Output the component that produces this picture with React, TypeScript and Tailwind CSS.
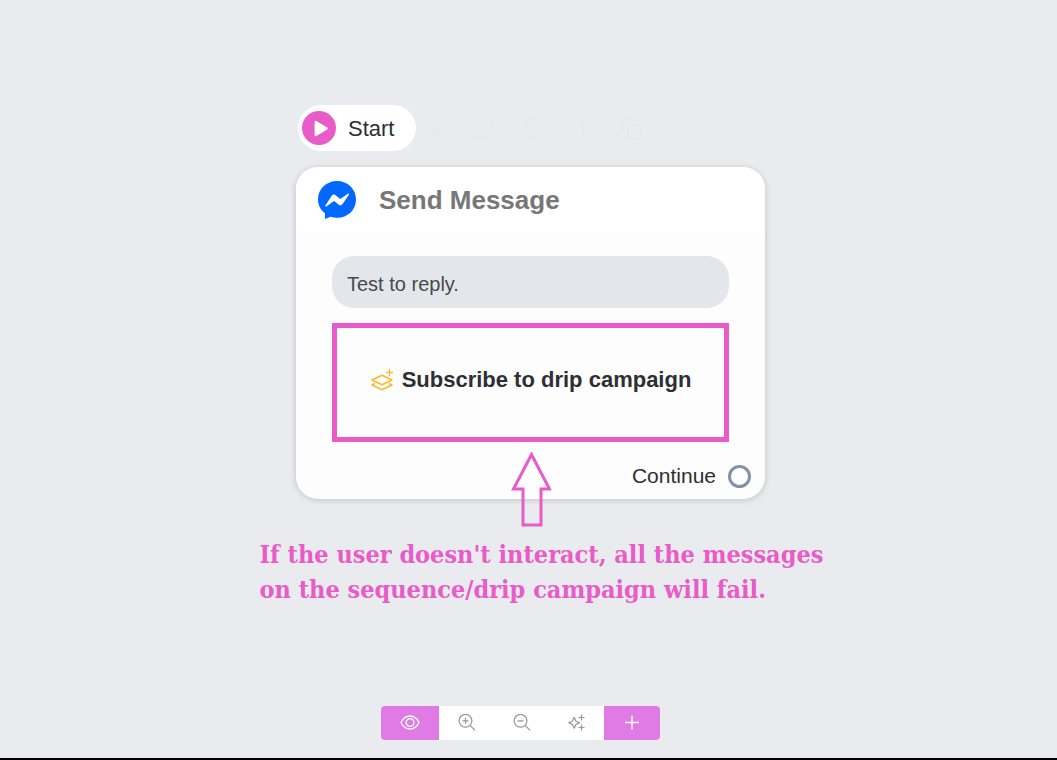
import React from "react";
import { Copy, Eye, Fingerprint, Link, Type } from "lucide-react";

function PlayIcon() {
  return (
    <svg width="34" height="34" viewBox="0 0 34 34" aria-hidden="true">
      <circle cx="17" cy="17" r="17" fill="#e85bc8" />
      <path d="M13.800 11v13l10.800-6.500z" fill="#fff" stroke="#fff" strokeWidth="2.400" strokeLinejoin="round" />
    </svg>
  );
}

function MessengerIcon() {
  return (
    <svg width="38" height="38" viewBox="0 0 38 38" aria-hidden="true">
      <path d="M19 0C8.500 0 0 7.800 0 18.400c0 5.600 2.600 10.500 7 13.800v5.800l5.500-2.200c2 .6 4.200.9 6.500.9 10.500 0 19-7.700 19-18.300S29.500 0 19 0z" fill="#0068ff" />
      <path d="M7.500 24.200l6.200-9.400c1-1.400 2.600-1.600 3.900-.6l4 3.200c.5.4 1 .4 1.500 0l6.600-4.700c.9-.6 1.800.2 1.200 1.100l-6.300 9.300c-.9 1.400-2.500 1.600-3.800.6l-4-3.200c-.5-.4-1-.4-1.500 0L8.800 25.300c-.9.600-1.900-.2-1.300-1.100z" fill="#fff" />
    </svg>
  );
}

function LayersPlusIcon() {
  return (
    <svg width="24" height="24" viewBox="0 0 24 24" fill="none" stroke="#fdb92e" strokeWidth="1.500" strokeLinejoin="round" strokeLinecap="round" aria-hidden="true">
      <path d="M12 7.200l10 4.800-10 4.800L2 12zM4.500 15.800L2 17l10 4.800L22 17l-2.500-1.200" />
      <path d="M19.500 1.500v6M16.500 4.500h6" strokeWidth="1.300" />
    </svg>
  );
}

function EyeIcon() {
  return (
    <svg width="20" height="20" viewBox="0 0 20 20" fill="none" stroke="#fff" strokeWidth="1.400" aria-hidden="true">
      <path d="M1 9.500c2-4.300 5.200-6.500 9-6.500s7 2.200 9 6.500c-2 4.300-5.200 6.500-9 6.500s-7-2.200-9-6.500z" />
      <circle cx="10" cy="9.500" r="3.900" />
    </svg>
  );
}

function ZoomIcon({ plus }: { plus?: boolean }) {
  return (
    <svg width="18" height="18" viewBox="0 0 18 18" fill="none" stroke="#949698" strokeWidth="1.200" aria-hidden="true">
      <circle cx="7.500" cy="6.800" r="6.400" />
      <path d="M12.100 11.400l5 5M4.500 6.800h6" />
      {plus && <path d="M7.500 3.800v6" />}
    </svg>
  );
}

function SparkleIcon() {
  return (
    <svg width="18" height="18" viewBox="0 0 18 18" fill="none" stroke="#949698" strokeWidth="1.200" strokeLinejoin="round" aria-hidden="true">
      <path d="M6.200 3.200l1.700 3.800 3.800 1.700-3.800 1.700-1.700 3.800-1.700-3.800L.7 8.700 4.500 7z" />
      <path d="M13.500.500v6M10.500 3.500h6M13.500 10.500v6M10.500 13.500h6" />
    </svg>
  );
}

function PlusIcon() {
  return (
    <svg width="16" height="16" viewBox="0 0 16 16" stroke="#fff" strokeWidth="1.400" aria-hidden="true">
      <path d="M8 .500v14M1 7.500h14" />
    </svg>
  );
}

function PointerArrow() {
  return (
    <svg className="absolute left-1/2 top-[285px] -translate-x-1/2" width="41" height="76" viewBox="0 0 41 76" fill="none" stroke="#e85bc8" strokeWidth="3" aria-hidden="true">
      <path d="M21 2.500L39 37H30.500V73H12.500V37H3z" />
    </svg>
  );
}

export default function App() {
  return (
    <main className="flex min-h-screen flex-col justify-between border-b-2 border-black bg-[#e9ebee] pt-[105px] pb-[18px] font-['Liberation_Sans',Arial,sans-serif] text-[#2d2f33]">
      <div>
        <div className="pl-1">
          <div className="mx-auto w-full max-w-[469px]">
            <div className="flex items-center gap-2 pl-0.5">
              <div className="flex h-[46px] items-center gap-3 rounded-full bg-white pl-1 pr-[22px] text-[22px]">
                <PlayIcon />
                <span>Start</span>
              </div>
              <div className="flex items-center gap-[26px] text-[#e5e7ea]" aria-hidden="true">
                <Eye size={23} strokeWidth={1} />
                <Link size={23} strokeWidth={1} />
                <Fingerprint size={23} strokeWidth={1} />
                <Type size={23} strokeWidth={1} />
                <Copy size={23} strokeWidth={1} />
              </div>
            </div>
            <article className="relative mt-4 rounded-[22px] bg-[#fdfdfd] shadow-[0_1px_6px_rgba(0,0,0,0.18)]">
              <header className="flex h-[66px] items-center gap-[23px] rounded-t-[22px] bg-white pl-[22px]">
                <MessengerIcon />
                <h1 className="text-[26px] font-bold text-[#777]">Send Message</h1>
              </header>
              <div className="px-9 pt-[23px]">
                <p className="flex h-[52px] items-center rounded-[22px] bg-[#e3e7ec] px-[15px] pt-1 text-[20px] text-[#48494c]">Test to reply.</p>
                <div className="mt-[15px] flex h-[119px] items-center justify-center gap-2 border-[5px] border-[#e85bc8] pb-[6px]">
                  <LayersPlusIcon />
                  <h2 className="whitespace-nowrap text-[22px] font-bold">Subscribe to drip campaign</h2>
                </div>
              </div>
              <div className="flex h-[57px] items-center justify-end gap-3 pr-[14px] pt-[11px] text-[21px]">
                <span>Continue</span>
                <span className="size-[23px] rounded-full border-[3px] border-[#8492a8] bg-white" />
              </div>
              <PointerArrow />
            </article>
          </div>
        </div>
        <p className="mx-auto mt-[38px] w-full max-w-[600px] pl-[31px] font-['DejaVu_Serif_Condensed','DejaVu_Serif',serif] text-[25px] leading-[35px] font-bold text-[#e85bc8]">
          <span className="block whitespace-nowrap">If the user doesn't interact, all the messages</span>
          <span className="block whitespace-nowrap">on the sequence/drip campaign will fail.</span>
        </p>
      </div>
      <nav aria-label="Canvas tools" className="flex justify-center pr-4">
        <div className="flex h-[34px] overflow-hidden rounded-[4px] bg-white">
          <button type="button" aria-label="Preview" className="flex w-[58px] items-center justify-center bg-[#e07be6]"><EyeIcon /></button>
          <button type="button" aria-label="Zoom in" className="flex w-[55px] items-center justify-center"><ZoomIcon plus /></button>
          <button type="button" aria-label="Zoom out" className="flex w-[55px] items-center justify-center"><ZoomIcon /></button>
          <button type="button" aria-label="Arrange" className="flex w-[55px] items-center justify-center"><SparkleIcon /></button>
          <button type="button" aria-label="Add" className="flex w-[56px] items-center justify-center bg-[#e07be6]"><PlusIcon /></button>
        </div>
      </nav>
    </main>
  );
}
